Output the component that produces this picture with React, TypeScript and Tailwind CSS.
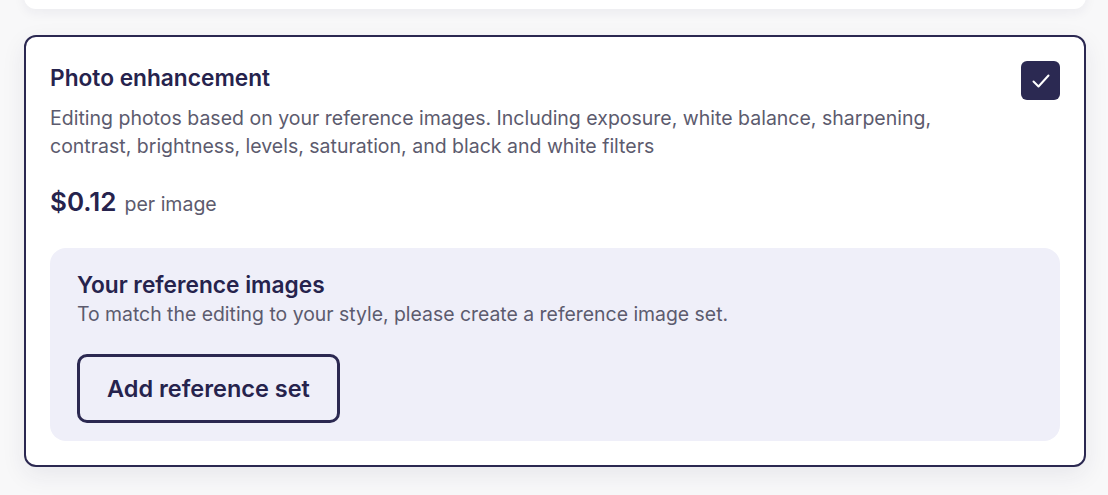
import React from 'react';

export default function App() {
  return (
    <div
      className="min-h-[495px] bg-[#f8f8f9] pl-[24px] pr-[22px] overflow-hidden"
      style={{ fontFamily: 'Inter, "Noto Sans", sans-serif' }}
    >
      {/* Previous card, mostly scrolled out of view */}
      <div className="h-[40px] -mt-[31px] rounded-b-[12px] bg-white shadow-[0_4px_12px_rgba(40,40,80,0.06)]" />

      {/* Selected option card */}
      <div className="mt-[26px] rounded-[12px] border-[2.5px] border-[#2b2851] bg-white px-6 pt-[25px] pb-6 shadow-[0_8px_24px_rgba(40,40,80,0.08)]">
        <div className="flex items-start gap-6">
          <div className="flex-1">
            <h2 className="mt-[1px] text-[22.7px] leading-[30px] font-semibold text-[#26234d]">
              Photo enhancement
            </h2>
            <p className="mt-[11px] text-[19.5px] leading-[28px] text-[#5c5b6e]">
              Editing photos based on your reference images. Including exposure, white balance, sharpening,
              contrast, brightness, levels, saturation, and black and white filters
            </p>
          </div>
          <div className="-mt-[1px] flex h-[39px] w-[39px] shrink-0 items-center justify-center rounded-[6px] bg-[#2b2952]">
            <svg width="20" height="16" viewBox="0 0 20 16" fill="none" stroke="white" strokeWidth="2" strokeLinecap="round" strokeLinejoin="round">
              <path d="M2.5 8.5L7.5 13.5L17.5 2.5" />
            </svg>
          </div>
        </div>

        <div className="mt-[26px] flex items-baseline gap-[8px]">
          <span className="text-[26px] leading-[32px] font-semibold text-[#26234d]">$0.12</span>
          <span className="text-[19.5px] leading-[28px] text-[#5c5b6e]">per image</span>
        </div>

        <div className="mt-[30px] rounded-[16px] bg-[#efeff9] px-[27px] pt-[22px] pb-[18px]">
          <h3 className="text-[22.7px] leading-[30px] font-semibold text-[#26234d]">Your reference images</h3>
          <p className="text-[19.4px] leading-[28px] text-[#5c5b6e]">
            To match the editing to your style, please create a reference image set.
          </p>
          <button className="mt-[26px] h-[69px] rounded-[10px] border-[3px] border-[#2b2851] px-[27px] text-[23.5px] font-semibold text-[#26234d]">
            Add reference set
          </button>
        </div>
      </div>
    </div>
  );
}
